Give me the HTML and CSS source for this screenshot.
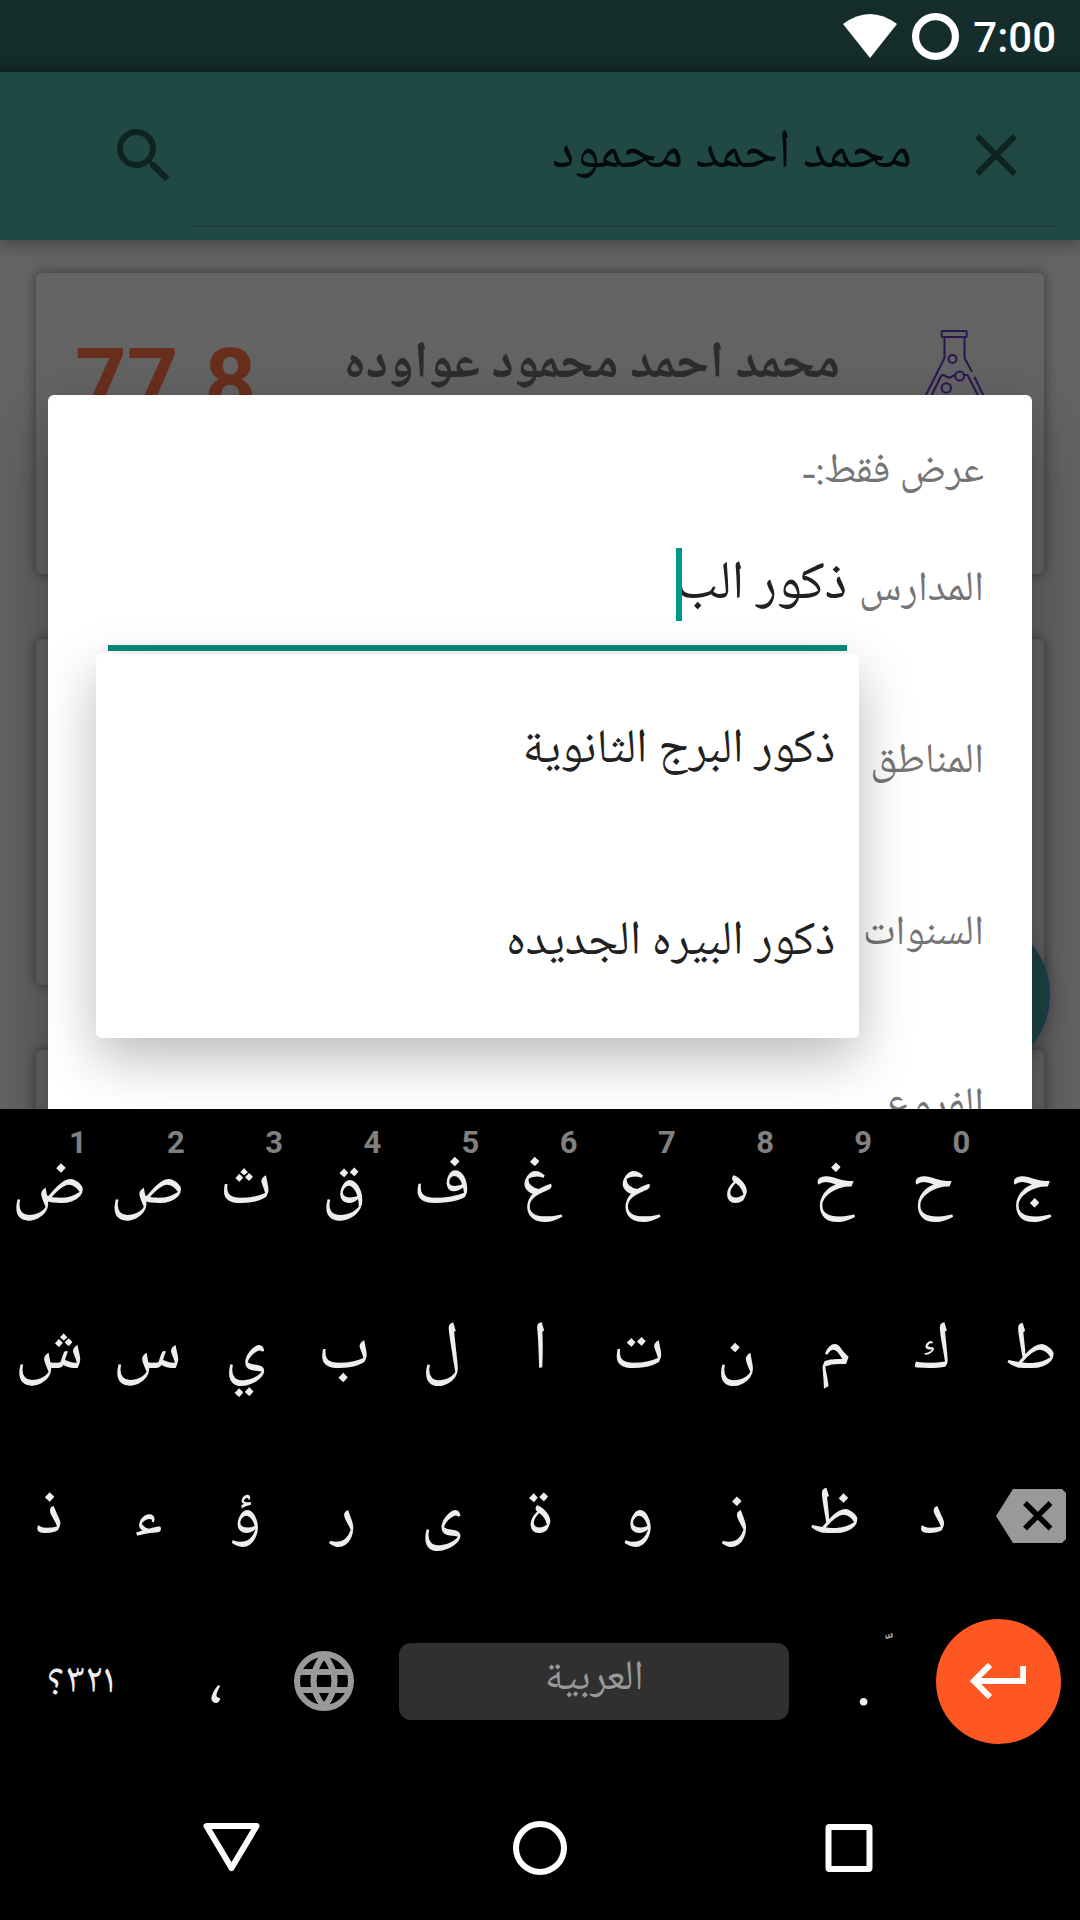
FILE: index.html
```html
<!DOCTYPE html>
<html lang="ar">
<head>
<meta charset="utf-8">
<title>بحث النتائج</title>
<link rel="stylesheet" href="styles.css">
</head>
<body>
<div class="phone">
  <main class="app">
    <header class="status-bar">
      <svg class="wifi" viewBox="0 0 54 44"><path d="M0 10Q27-10 54 10L27 44Z" fill="#fff"/></svg>
      <svg class="ring" viewBox="0 0 46 46"><circle cx="23" cy="23" r="19.5" fill="none" stroke="#fff" stroke-width="7"/></svg>
      <span class="clock">7:00</span>
    </header>
    <div class="app-bar">
      <svg class="icon search-icon" viewBox="0 0 24 24"><path d="M15.5 14h-.79l-.28-.27A6.471 6.471 0 0 0 16 9.5 6.5 6.5 0 1 0 9.500 16c1.610 0 3.090-.59 4.230-1.570l.27.28v.79l5 4.990L20.490 19l-4.990-5zm-6 0C7.010 14 5 11.990 5 9.500S7.010 5 9.500 5 14 7.010 14 9.500 11.990 14 9.500 14z"/></svg>
      <div class="search-field">
        <span class="query" dir="rtl">محمد احمد محمود</span>
        <svg class="icon" viewBox="0 0 24 24"><path d="M19 6.410 17.590 5 12 10.590 6.410 5 5 6.410 10.590 12 5 17.590 6.410 19 12 13.410 17.590 19 19 17.590 13.410 12z"/></svg>
      </div>
    </div>
    <section class="results">
      <article class="card card-first">
        <span class="score">77.8</span>
        <span class="name" dir="rtl">محمد احمد محمود عواوده</span>
        <svg class="flask" viewBox="0 0 70 80" fill="none" stroke="#2a1650" stroke-width="2">
          <rect x="20.700" y="1" width="25" height="6" rx="1"/>
          <path d="M23.500 7V28L2 71M43.500 7V28L51 42M53.500 47 65 71M8 71 20 46Q23 44 25 46.500 28 48.500 31 46.500 33 45 35 45.500M43 45H46.500L60 71"/>
          <circle cx="31.500" cy="29" r="4"/><circle cx="38.700" cy="46" r="4.500"/><circle cx="25.300" cy="58" r="4.700"/>
        </svg>
      </article>
      <article class="card card-second"></article>
      <article class="card card-third"></article>
    </section>
    <div class="fab"></div>

    <section class="dialog" dir="rtl">
      <h2 class="dialog-title">عرض فقط:-</h2>
      <div class="filter">
        <label class="filter-label">المدارس</label>
        <div class="filter-field">
          <div class="filter-input">ذكور الب<i class="caret"></i></div>
          <ul class="suggestions">
            <li>ذكور البرج الثانوية</li>
            <li>ذكور البيره الجديده</li>
          </ul>
        </div>
      </div>
      <div class="filter"><label class="filter-label">المناطق</label></div>
      <div class="filter"><label class="filter-label">السنوات</label></div>
      <div class="filter"><label class="filter-label">الفروع</label></div>
    </section>
  </main>

  <section class="keyboard">
    <div class="key-row">
      <span class="key">ض<small>1</small></span><span class="key">ص<small>2</small></span><span class="key">ث<small>3</small></span><span class="key">ق<small>4</small></span><span class="key">ف<small>5</small></span><span class="key">غ<small>6</small></span><span class="key">ع<small>7</small></span><span class="key">ه<small>8</small></span><span class="key">خ<small>9</small></span><span class="key">ح<small>0</small></span><span class="key">ج</span>
    </div>
    <div class="key-row">
      <span class="key">ش</span><span class="key">س</span><span class="key">ي</span><span class="key">ب</span><span class="key">ل</span><span class="key">ا</span><span class="key">ت</span><span class="key">ن</span><span class="key">م</span><span class="key">ك</span><span class="key">ط</span>
    </div>
    <div class="key-row">
      <span class="key">ذ</span><span class="key">ء</span><span class="key">ؤ</span><span class="key">ر</span><span class="key">ى</span><span class="key">ة</span><span class="key">و</span><span class="key">ز</span><span class="key">ظ</span><span class="key">د</span>
      <span class="key"><svg class="backspace" viewBox="0 0 70 54"><path d="M0 27 17 0H66L70 4V50L66 54H17Z" fill="#999"/><path d="M29 14 54.500 39.500M54.500 14 29 39.500" stroke="#000" stroke-width="5.500"/></svg></span>
    </div>
    <div class="bottom-row">
      <span class="symbols" dir="rtl">٣٢١؟</span>
      <span class="punct">،</span>
      <svg class="globe" viewBox="0 0 60 60" fill="none" stroke="#999" stroke-width="6"><circle cx="30" cy="30" r="27"/><path d="M4 21H56M4 39H56M30 4Q9 30 30 56M30 4Q51 30 30 56"/></svg>
      <span class="space" dir="rtl">العربية</span>
      <span class="punct period">.<small dir="rtl">&nbsp;&#x651;</small></span>
      <span class="enter"><svg viewBox="0 0 56 36"><path d="M53.200 3V18H4M20 2 4 18 20 34" fill="none" stroke="#fff" stroke-width="6"/></svg></span>
    </div>
  </section>

  <nav class="nav-bar">
    <svg viewBox="0 0 60 60"><path d="M5.500 8H55.500L30.500 50Z" fill="none" stroke="#fff" stroke-width="6" stroke-linejoin="round"/></svg>
    <svg viewBox="0 0 60 60"><circle cx="30" cy="30" r="24" fill="none" stroke="#fff" stroke-width="6"/></svg>
    <svg viewBox="0 0 60 60"><rect x="9.500" y="9" width="41" height="42" rx="1" fill="none" stroke="#fff" stroke-width="6" stroke-linejoin="round"/></svg>
  </nav>
</div>
</body>
</html>
```
FILE: styles.css
```css
* { box-sizing: border-box; }

body {
  margin: 0;
  background: #000;
  font-family: "Noto Naskh Arabic UI", "Noto Naskh Arabic", "DejaVu Sans", sans-serif;
}

svg { display: block; flex: none; }

.phone {
  display: flex;
  flex-direction: column;
  width: 1080px;
  height: 1920px;
  overflow: hidden;
}

/* ---------- App behind the dialog ---------- */
.app {
  position: relative;
  height: 1109px;
  background: #646464;
  overflow: hidden;
}

.status-bar {
  display: flex;
  align-items: center;
  justify-content: flex-end;
  height: 72px;
  padding-right: 24px;
  background: linear-gradient(#142c2a 62px, #112422);
  color: #fff;
}
.wifi { width: 54px; height: 44px; margin-right: 15px; }
.ring { width: 47px; height: 47px; margin-right: 14px; }
.clock {
  padding-top: 4px;
  font: 500 42px/60px Roboto, sans-serif;
}

.app-bar {
  position: relative;
  display: flex;
  height: 168px;
  padding: 0 24px 12px 108px;
  background: #204945;
  box-shadow: 0 4px 16px rgba(0, 0, 0, .35);
}
.icon { width: 72px; height: 72px; fill: #0f2321; }
.search-icon { margin: 48px 12px 0 0; }
.search-field {
  display: flex;
  flex: 1;
  justify-content: flex-end;
  gap: 48px;
  height: 155px;
  padding: 47px 24px 0 0;
  border-bottom: 2px solid #1c413e;
}
.query { font-size: 54.300px; line-height: 69px; color: #050b0a; }

.results {
  display: flex;
  flex-direction: column;
  gap: 65px;
  padding: 33px 36px 0;
}
.card {
  display: flex;
  border-radius: 6px;
  background: #646464;
  box-shadow: 0 0 12px 1px rgba(0, 0, 0, .38);
}
.card-first { height: 301px; padding: 57px 53px 0 39px; }
.card-second { height: 346px; }
.card-third { height: 300px; }
.score { flex: 1; font: bold 90px/105px Roboto, sans-serif; color: #692f1d; }
.name { padding-right: 81px; font-size: 51.500px; font-weight: bold; line-height: 69px; color: #2d2d2d; }
.flask { width: 70px; height: 80px; }

.fab {
  position: absolute;
  left: 890px;
  top: 915px;
  width: 160px;
  height: 160px;
  border: 2px solid #1e3c5c;
  border-radius: 50%;
  background: #1d4440;
  box-shadow: 0 6px 18px rgba(0, 0, 0, .3);
}

/* ---------- Filter dialog ---------- */
.dialog {
  position: absolute;
  top: 395px;
  left: 48px;
  width: 984px;
  height: 900px;
  padding: 47px 48px 0;
  border-radius: 6px;
  background: #fff;
  box-shadow: 0 24px 64px rgba(0, 0, 0, .32);
}
.dialog-title {
  margin: 0 0 1px;
  font-size: 42px;
  font-weight: normal;
  line-height: 60px;
  color: #757575;
}
.filter { display: flex; align-items: center; height: 172px; }
.filter-label { padding-top: 2px; font-size: 42px; line-height: 60px; color: #757575; }
.filter-field { position: relative; flex: 1; height: 172px; padding: 45px 12px 0; }
.filter-input {
  display: flex;
  height: 103px;
  border-bottom: 6px solid #00897b;
  font-size: 54px;
  line-height: 73px;
  color: #212121;
}
.caret { width: 6px; height: 73px; margin-right: -6px; background: #009688; }

.suggestions {
  position: absolute;
  top: 151px;
  left: 0;
  right: 0;
  margin: 0;
  padding: 0;
  list-style: none;
  border-radius: 6px;
  background: #fff;
  box-shadow: 0 20px 54px rgba(0, 0, 0, .27);
}
.suggestions li {
  height: 192px;
  padding: 0 24px;
  font-size: 48px;
  line-height: 192px;
  color: #212121;
}

/* ---------- Keyboard ---------- */
.keyboard { height: 667px; background: #000; color: #eee; }
.key-row { display: grid; grid-template-columns: repeat(11, 1fr); height: 165px; }
.key {
  position: relative;
  font-size: 68px;
  line-height: 153px;
  text-align: center;
}
.key small {
  position: absolute;
  top: 18px;
  right: 11.500px;
  font: bold 31px/32px Roboto, sans-serif;
  color: #808080;
}
.backspace { width: 70px; height: 54px; margin: 50px 0 0 14px; }

.bottom-row {
  display: grid;
  grid-template-columns: 162px 108px 108px 432px 108px 162px;
  align-items: center;
  justify-items: center;
  height: 155px;
}
.symbols { font-size: 42px; line-height: 60px; }
.punct { font-size: 68px; line-height: 150px; }
.period { position: relative; font-family: Roboto, sans-serif; }
.period small {
  position: absolute;
  left: 30px;
  top: 12px;
  font: bold 38px/44px "Noto Naskh Arabic", "DejaVu Sans", sans-serif;
  color: #999;
}
.globe { width: 60px; height: 60px; margin-top: -1px; }
.space {
  width: 390px;
  height: 77px;
  border-radius: 12px;
  background: #303030;
  font-size: 42px;
  line-height: 72px;
  text-align: center;
  color: #999;
}
.enter {
  display: grid;
  place-items: center;
  width: 125px;
  height: 125px;
  margin-right: 2px;
  border-radius: 50%;
  background: #ff5722;
}
.enter svg { width: 56px; height: 36px; margin-top: -1px; }

/* ---------- Navigation bar ---------- */
.nav-bar {
  display: flex;
  justify-content: space-between;
  align-items: center;
  height: 144px;
  padding: 0 201px;
}
.nav-bar svg { width: 60px; height: 60px; }
```
